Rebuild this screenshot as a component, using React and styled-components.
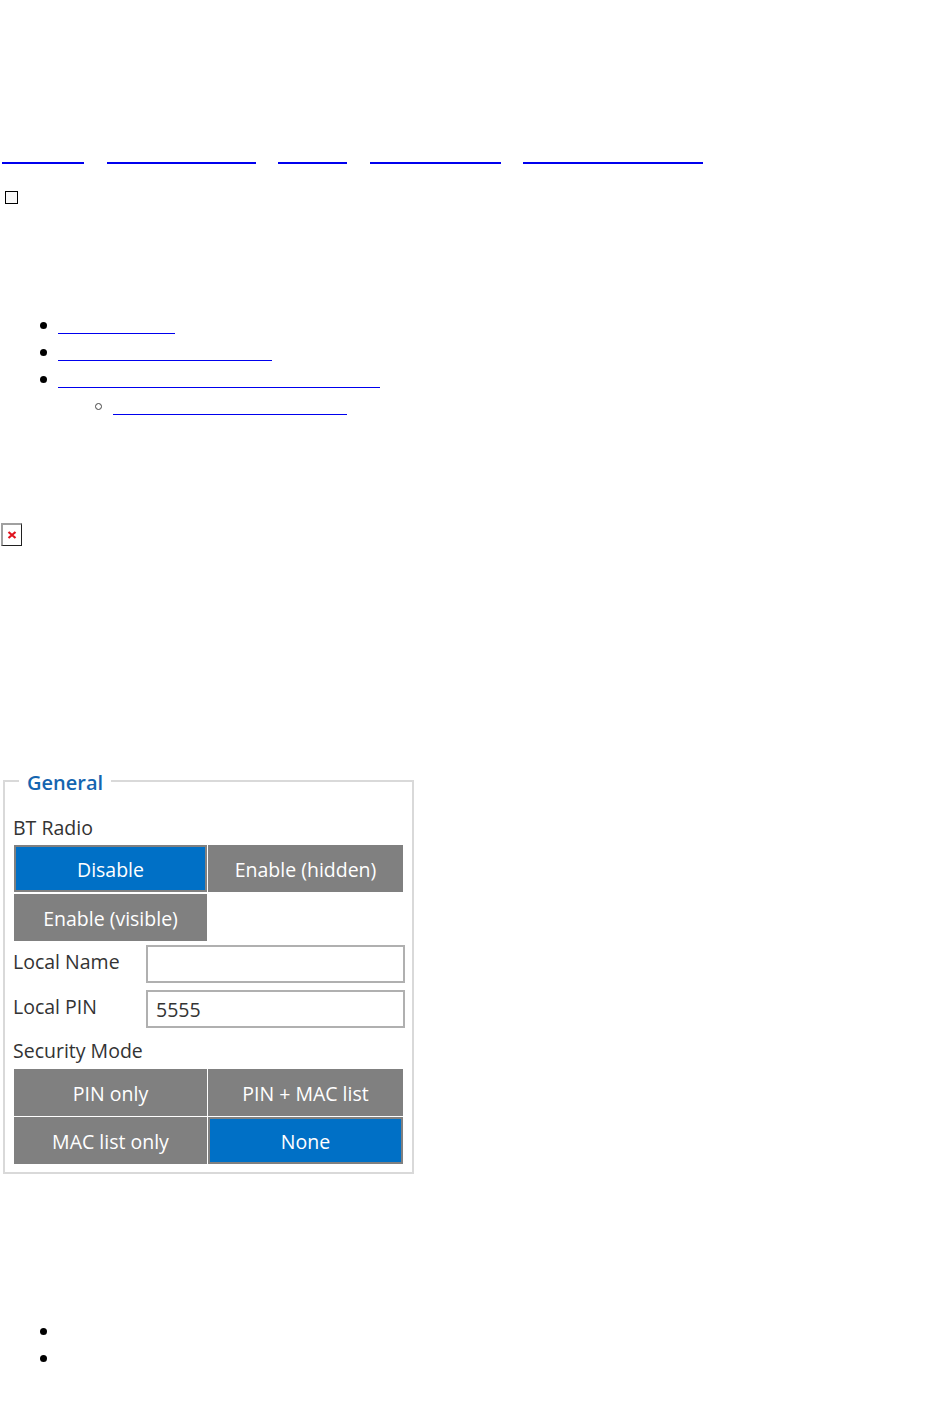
import React from "react";
import styled, { createGlobalStyle } from "styled-components";

const Global = createGlobalStyle`
  html, body { margin: 0; padding: 0; background: #fff; }
  body { font-family: "Open Sans", "Noto Sans", sans-serif; color: #000; }
`;
const Page = styled.div`
  width: 950px;
  height: 1408px;
  overflow: hidden;
  box-sizing: border-box;
  padding-top: 152px;
`;
const Crumbs = styled.nav`
  display: flex;
  gap: 22.5px;
  padding-left: 2px;
`;
const BlankLink = styled.a`
  display: block;
  width: ${(p) => p.$w}px;
  height: 10px;
  border-bottom: 2px solid #0000ee;
`;
const Toggle = styled.div`
  width: 11px;
  height: 11px;
  margin: 27px 0 0 5px;
  border: 1px solid #000;
  background: #f9f9f9;
`;
const List = styled.ul`
  margin: ${(p) => p.$top}px 0 0;
  padding: 0 0 0 58px;
  list-style: none;
  font-size: 16px;
  line-height: 27px;
`;
const SubList = styled.ul`
  margin: 0;
  padding: 0 0 0 55px;
  list-style: none;
`;
const Item = styled.li`
  position: relative;
  height: ${(p) => (p.$open ? "auto" : "27px")};
  &::before {
    content: "";
    position: absolute;
    left: -18px;
    top: 10px;
    width: 7px;
    height: 7px;
    border-radius: 50%;
    background: #000;
  }
`;
const SubItem = styled.li`
  position: relative;
  height: 27px;
  &::before {
    content: "";
    position: absolute;
    left: -18px;
    top: 10px;
    box-sizing: border-box;
    width: 7px;
    height: 7px;
    border-radius: 50%;
    border: 1px solid #444;
  }
`;
const ItemLink = styled.a`
  display: inline-block;
  vertical-align: top;
  width: ${(p) => p.$w}px;
  height: 21px;
  border-bottom: 1px solid #0000ee;
`;
const Broken = styled.div`
  box-sizing: border-box;
  width: 21px;
  height: 23px;
  margin-top: 103px;
  margin-left: 1px;
  border-style: solid;
  border-width: 2px 1px 1px 2px;
  border-color: #a0a0a0 #202020 #202020 #a0a0a0;
  display: flex;
  align-items: center;
  justify-content: center;
`;
const Panel = styled.fieldset`
  box-sizing: border-box;
  width: 411px;
  height: 407px;
  margin: 221px 0 0 3px;
  padding: 0 6px 0 8px;
  border: 2px solid #d9d9d9;
  font-size: 19.5px;
  color: #333;
  min-inline-size: 0;
`;
const Legend = styled.legend`
  margin-left: 6px;
  padding: 4px 8px 0;
  font-size: 20px;
  font-weight: 600;
  line-height: 24px;
  color: #1565b0;
`;
const Label = styled.div`
  line-height: 26px;
  margin-top: ${(p) => p.$top}px;
  margin-bottom: ${(p) => p.$bottom}px;
`;
const ButtonGrid = styled.div`
  display: grid;
  grid-template-columns: 193px 195px;
  grid-auto-rows: 47px;
  column-gap: 1px;
  row-gap: ${(p) => p.$gap}px;
  margin-left: 1px;
`;
const Choice = styled.div`
  box-sizing: border-box;
  display: flex;
  align-items: center;
  justify-content: center;
  background: ${(p) => (p.$on ? "#0070c6" : "#808080")};
  border: 2px solid #808080;
  color: #fff;
  padding-top: 2px;
`;
const Row = styled.div`
  display: flex;
  align-items: flex-start;
  height: 38px;
  margin-top: ${(p) => p.$top}px;
`;
const RowLabel = styled.div`
  width: 133px;
  line-height: 32px;
  padding-top: 1px;
`;
const Field = styled.div`
  box-sizing: border-box;
  width: 259px;
  height: 38px;
  border: 2px solid #b0b0b0;
  padding: 1px 8px;
  line-height: 34px;
`;

export default function App() {
  return (
    <Page>
      <Global />
      <Crumbs>
        {[82, 149, 69, 131, 180].map((w) => (
          <BlankLink key={w} href="#" $w={w} />
        ))}
      </Crumbs>
      <Toggle />
      <List $top={108}>
        <Item><ItemLink href="#" $w={117} /></Item>
        <Item><ItemLink href="#" $w={214} /></Item>
        <Item $open>
          <ItemLink href="#" $w={322} />
          <SubList>
            <SubItem><ItemLink href="#" $w={234} /></SubItem>
          </SubList>
        </Item>
      </List>
      <Broken>
        <svg width="10" height="10" viewBox="0 0 10 10">
          <path d="M1.5 2l7 6M8.5 2l-7 6" stroke="#e0141e" strokeWidth="2.2" fill="none" />
        </svg>
      </Broken>
      <Panel>
        <Legend>General</Legend>
        <Label $top={20} $bottom={4}>BT Radio</Label>
        <ButtonGrid $gap={2}>
          <Choice $on>Disable</Choice>
          <Choice>Enable (hidden)</Choice>
          <Choice>Enable (visible)</Choice>
        </ButtonGrid>
        <Row $top={4}>
          <RowLabel>Local Name</RowLabel>
          <Field />
        </Row>
        <Row $top={7}>
          <RowLabel>Local PIN</RowLabel>
          <Field>5555</Field>
        </Row>
        <Label $top={10} $bottom={5}>Security Mode</Label>
        <ButtonGrid $gap={1}>
          <Choice>PIN only</Choice>
          <Choice>PIN + MAC list</Choice>
          <Choice>MAC list only</Choice>
          <Choice $on>None</Choice>
        </ButtonGrid>
      </Panel>
      <List $top={144}>
        <Item>&nbsp;</Item>
        <Item>&nbsp;</Item>
      </List>
    </Page>
  );
}
